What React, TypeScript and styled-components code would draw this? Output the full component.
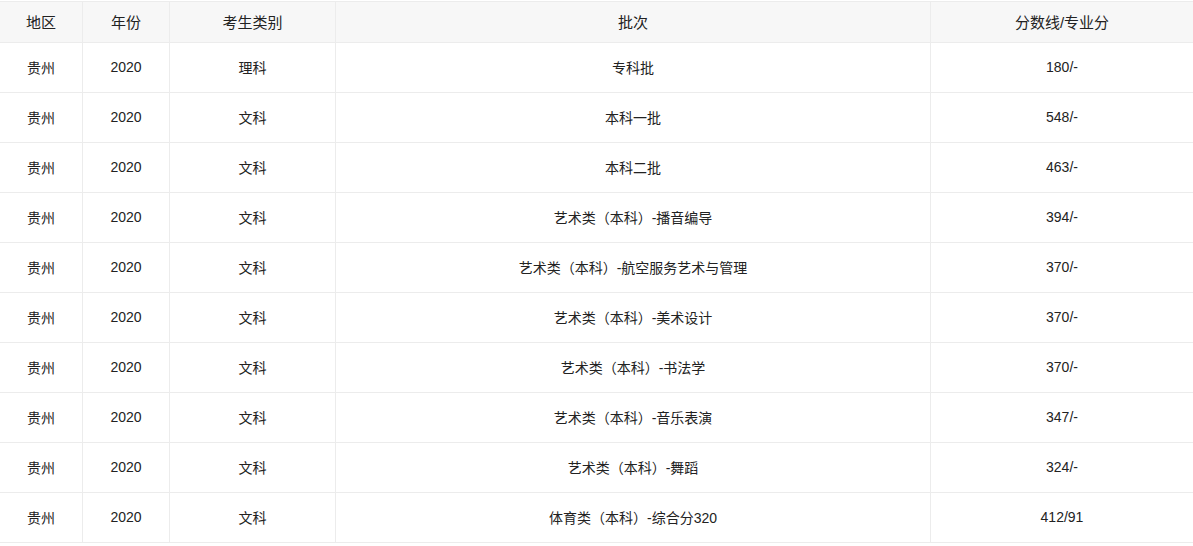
import styled, { createGlobalStyle } from "styled-components";

const GlobalStyle = createGlobalStyle`
  body {
    margin: 0;
    background: #fff;
    font-family: "Liberation Sans", "Noto Sans CJK SC", sans-serif;
    color: #222;
  }
`;

const Table = styled.table`
  width: 1194px;
  margin-top: 1px;
  border-collapse: collapse;
  table-layout: fixed;
`;

const HeadCell = styled.th<{ $w?: number }>`
  width: ${(p) => (p.$w ? `${p.$w}px` : "auto")};
  height: 38px;
  padding: 0 0 2px;
  background: #f7f7f7;
  border: 1px solid #ececec;
  font-size: 15px;
  font-weight: normal;
  text-align: center;
  color: #222;
  &:first-child {
    border-left: none;
  }
`;

const Cell = styled.td`
  height: 47px;
  padding: 0 0 2px;
  border: 1px solid #ececec;
  font-size: 14px;
  text-align: center;
  color: #222;
  &:first-child {
    border-left: none;
  }
`;

const columns = [
  { title: "地区", w: 82 },
  { title: "年份", w: 86 },
  { title: "考生类别", w: 165 },
  { title: "批次", w: 594 },
  { title: "分数线/专业分" },
];

const rows = [
  ["贵州", "2020", "理科", "专科批", "180/-"],
  ["贵州", "2020", "文科", "本科一批", "548/-"],
  ["贵州", "2020", "文科", "本科二批", "463/-"],
  ["贵州", "2020", "文科", "艺术类（本科）-播音编导", "394/-"],
  ["贵州", "2020", "文科", "艺术类（本科）-航空服务艺术与管理", "370/-"],
  ["贵州", "2020", "文科", "艺术类（本科）-美术设计", "370/-"],
  ["贵州", "2020", "文科", "艺术类（本科）-书法学", "370/-"],
  ["贵州", "2020", "文科", "艺术类（本科）-音乐表演", "347/-"],
  ["贵州", "2020", "文科", "艺术类（本科）-舞蹈", "324/-"],
  ["贵州", "2020", "文科", "体育类（本科）-综合分320", "412/91"],
];

export default function App() {
  return (
    <>
      <GlobalStyle />
      <Table>
        <thead>
          <tr>
            {columns.map((c) => (
              <HeadCell key={c.title} $w={c.w}>
                {c.title}
              </HeadCell>
            ))}
          </tr>
        </thead>
        <tbody>
          {rows.map((r, i) => (
            <tr key={i}>
              {r.map((v, j) => (
                <Cell key={j}>{v}</Cell>
              ))}
            </tr>
          ))}
        </tbody>
      </Table>
    </>
  );
}
